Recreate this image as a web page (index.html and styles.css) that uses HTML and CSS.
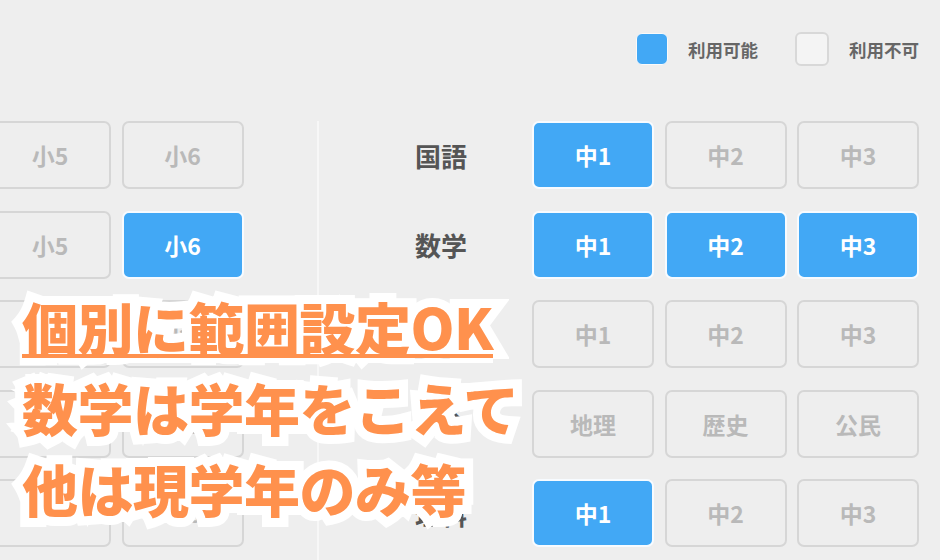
FILE: index.html
```html
<!DOCTYPE html>
<html lang="ja">
<head>
    <meta charset="UTF-8">
    <title>利用範囲設定</title>
    <link rel="stylesheet" href="styles.css">
</head>
<body>
    <div class="screen">
        <!-- Legend -->
        <header class="legend">
            <div class="legend-item">
                <span class="swatch swatch-on"></span>
                <span class="legend-label">利用可能</span>
            </div>
            <div class="legend-item">
                <span class="swatch swatch-off"></span>
                <span class="legend-label">利用不可</span>
            </div>
        </header>

        <main class="panels">
            <!-- Elementary grades (cut off on the left) -->
            <section class="panel panel-elementary">
                <div class="row">
                    <span class="subject">国語</span>
                    <span class="grade">小4</span>
                    <span class="grade">小5</span>
                    <span class="grade">小6</span>
                </div>
                <div class="row">
                    <span class="subject">算数</span>
                    <span class="grade">小4</span>
                    <span class="grade">小5</span>
                    <span class="grade is-on">小6</span>
                </div>
                <div class="row">
                    <span class="subject">英語</span>
                    <span class="grade">小4</span>
                    <span class="grade">小5</span>
                    <span class="grade">小6</span>
                </div>
                <div class="row">
                    <span class="subject">社会</span>
                    <span class="grade">小4</span>
                    <span class="grade">小5</span>
                    <span class="grade">小6</span>
                </div>
                <div class="row">
                    <span class="subject">理科</span>
                    <span class="grade">小4</span>
                    <span class="grade">小5</span>
                    <span class="grade">小6</span>
                </div>
            </section>

            <!-- Junior high grades -->
            <section class="panel panel-junior">
                <div class="row">
                    <span class="subject">国語</span>
                    <span class="grade is-on">中1</span>
                    <span class="grade">中2</span>
                    <span class="grade">中3</span>
                </div>
                <div class="row">
                    <span class="subject">数学</span>
                    <span class="grade is-on">中1</span>
                    <span class="grade is-on">中2</span>
                    <span class="grade is-on">中3</span>
                </div>
                <div class="row">
                    <span class="subject">英語</span>
                    <span class="grade">中1</span>
                    <span class="grade">中2</span>
                    <span class="grade">中3</span>
                </div>
                <div class="row">
                    <span class="subject">社会</span>
                    <span class="grade">地理</span>
                    <span class="grade">歴史</span>
                    <span class="grade">公民</span>
                </div>
                <div class="row">
                    <span class="subject">理科</span>
                    <span class="grade is-on">中1</span>
                    <span class="grade">中2</span>
                    <span class="grade">中3</span>
                </div>
            </section>
        </main>

        <!-- Catch copy over the table -->
        <div class="catch">
            <p class="catch-line"><span class="catch-underline">個別に範囲設定OK</span></p>
            <p class="catch-line">数学は学年をこえて</p>
            <p class="catch-line">他は現学年のみ等</p>
        </div>
    </div>
</body>
</html>
```

FILE: styles.css
```css
/* Resetting some defaults */
* {
    margin: 0;
    padding: 0;
    box-sizing: border-box;
}

body {
    font-family: "Noto Sans CJK JP", "Noto Sans", sans-serif;
    background: #eeeeee;
}

.screen {
    position: relative;
    width: 940px;
    height: 560px;
    overflow: hidden;
}

/* Legend */
.legend {
    display: flex;
    justify-content: flex-end;
    align-items: flex-start;
    gap: 37px;
    height: 121px;
    padding: 32px 21px 0 0;
}

.legend-item {
    display: flex;
    align-items: center;
    gap: 20px;
    height: 34px;
}

.swatch {
    display: block;
    border-radius: 6px;
}

.swatch-on {
    width: 32px;
    height: 32px;
    background: #42a8f5;
    border: 1px solid #fafafa;
}

.swatch-off {
    width: 34px;
    height: 34px;
    background: #f4f4f4;
    border: 2px solid #d8d8d8;
}

.legend-label {
    font-size: 17.5px;
    font-weight: 700;
    color: #666;
}

/* Panels */
.panels {
    display: flex;
    height: 439px;
}

.panel {
    display: flex;
    flex-direction: column;
    gap: 21.5px;
}

.panel-elementary {
    width: 317px;
    align-items: flex-end;
    padding-right: 73.5px;
    overflow: hidden;
}

.panel-junior {
    flex: 1;
    border-left: 2px solid #f7f7f7;
}

.row {
    display: flex;
    align-items: center;
    gap: 10.5px;
    flex-shrink: 0;
}

.subject {
    width: 148px;
    margin-right: 54.5px;
    text-align: right;
    font-size: 26px;
    font-weight: 700;
    color: #555;
}

.grade {
    display: flex;
    justify-content: center;
    align-items: center;
    width: 122px;
    height: 68px;
    border: 2px solid #d6d6d6;
    border-radius: 7px;
    font-size: 23px;
    font-weight: 700;
    color: #b9b9b9;
}

.grade.is-on {
    background: #42a8f5;
    border-color: #f7fbff;
    color: #fff;
}

/* Catch copy */
.catch {
    position: absolute;
    top: 285px;
    left: 22px;
    z-index: 1;
    font-size: 56px;
    font-weight: 900;
    line-height: 81px;
    letter-spacing: -0.5px;
    color: #ff914d;
    white-space: nowrap;
    -webkit-text-stroke: 18px #fff;
    paint-order: stroke fill;
}

.catch-underline {
    position: relative;
}

.catch-underline::after {
    content: "";
    position: absolute;
    left: 0;
    right: 0;
    bottom: 8px;
    height: 4px;
    background: #ff914d;
    box-shadow: 0 5px 0 #fff;
}
```
